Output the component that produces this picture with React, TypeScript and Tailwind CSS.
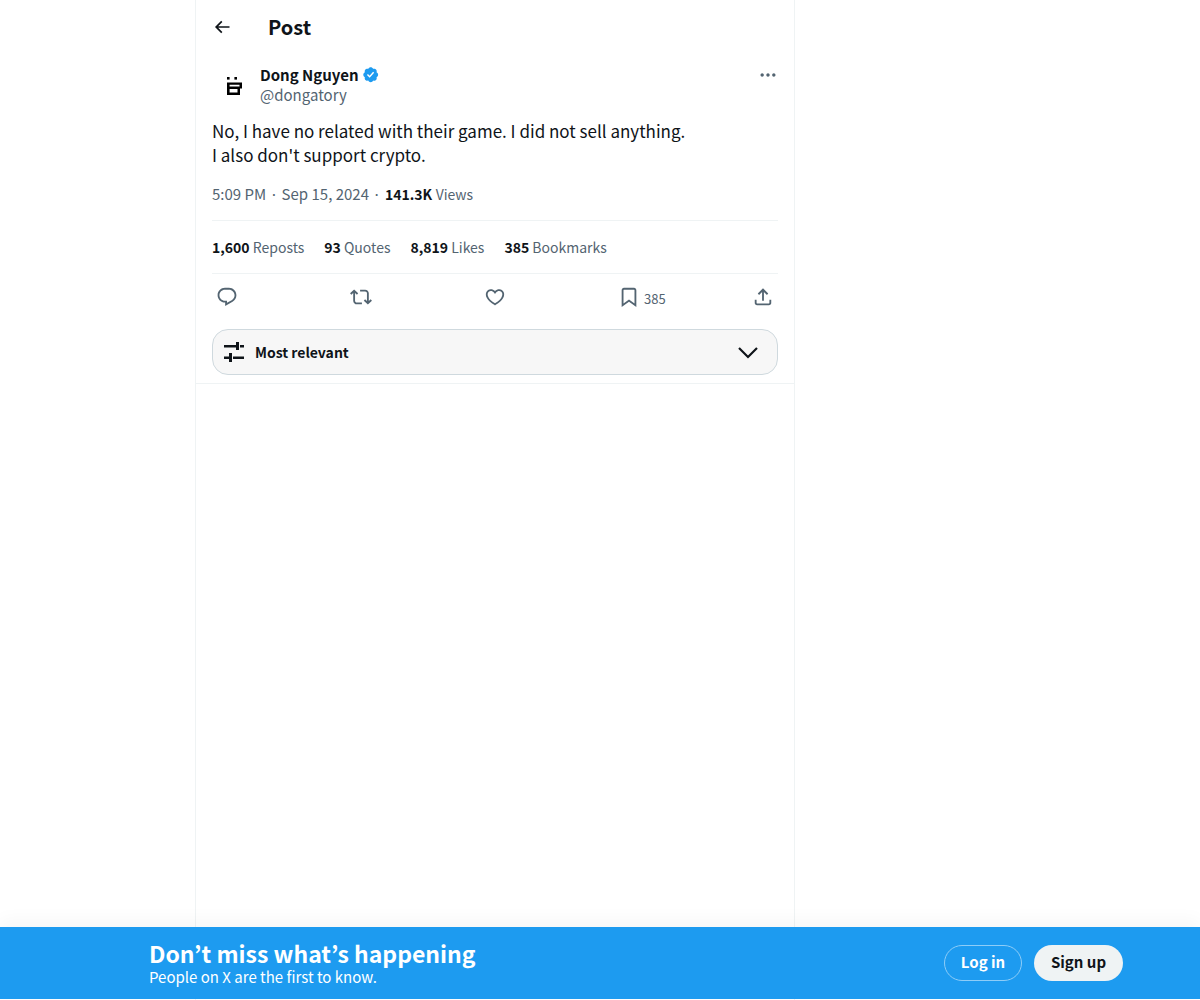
const P = ({ d, className }: { d: string; className: string }) => (
  <svg viewBox="0 0 24 24" fill="currentColor" className={className}>
    <path d={d} />
  </svg>
);

const icons = {
  back: "M7.414 13l5.043 5.04-1.414 1.42L3.586 12l7.457-7.46 1.414 1.42L7.414 11H21v2H7.414z",
  verified:
    "M20.396 11c-.018-.646-.215-1.275-.57-1.816-.354-.54-.852-.972-1.438-1.246.223-.607.27-1.264.14-1.897-.131-.634-.437-1.218-.882-1.687-.47-.445-1.053-.75-1.687-.882-.633-.13-1.29-.083-1.897.14-.273-.587-.704-1.086-1.245-1.44S11.647 1.62 11 1.604c-.646.017-1.273.213-1.813.568s-.969.854-1.24 1.44c-.608-.223-1.267-.272-1.902-.14-.635.13-1.22.436-1.69.882-.445.47-.749 1.055-.878 1.688-.13.633-.08 1.29.144 1.896-.587.274-1.087.705-1.443 1.245-.356.54-.555 1.17-.574 1.817.02.647.218 1.276.574 1.817.356.54.856.972 1.443 1.245-.224.606-.274 1.263-.144 1.896.13.634.433 1.218.877 1.688.47.443 1.054.747 1.687.878.633.132 1.29.084 1.897-.136.274.586.705 1.084 1.246 1.439.54.354 1.17.551 1.816.569.647-.016 1.276-.213 1.817-.567s.972-.854 1.245-1.44c.604.239 1.266.296 1.903.164.636-.132 1.22-.447 1.68-.907.46-.46.776-1.044.908-1.681s.075-1.299-.165-1.903c.586-.274 1.084-.705 1.439-1.246.354-.54.551-1.17.569-1.816zM9.662 14.85l-3.429-3.428 1.293-1.302 2.072 2.072 4.4-4.794 1.347 1.246z",
  dots: "M3 12c0-1.1.9-2 2-2s2 .9 2 2-.9 2-2 2-2-.9-2-2zm9 2c1.1 0 2-.9 2-2s-.9-2-2-2-2 .9-2 2 .9 2 2 2zm7 0c1.1 0 2-.9 2-2s-.9-2-2-2-2 .9-2 2 .9 2 2 2z",
  reply:
    "M1.751 10c0-4.42 3.584-8 8.005-8h4.366c4.49 0 8.129 3.64 8.129 8.13 0 2.96-1.607 5.68-4.196 7.11l-8.054 4.46v-3.69h-.067c-4.49.1-8.183-3.51-8.183-8.01zm8.005-6c-3.317 0-6.005 2.69-6.005 6 0 3.37 2.77 6.08 6.138 6.01l.351-.01h1.761v2.3l5.087-2.81c1.951-1.08 3.163-3.13 3.163-5.36 0-3.39-2.744-6.13-6.129-6.13H9.756z",
  retweet:
    "M4.5 3.88l4.432 4.14-1.364 1.46L5.5 7.55V16c0 1.1.896 2 2 2H13v2H7.5c-2.209 0-4-1.79-4-4V7.55L1.432 9.48.068 8.02 4.5 3.88zM16.5 6H11V4h5.5c2.209 0 4 1.79 4 4v8.45l2.068-1.93 1.364 1.46-4.432 4.14-4.432-4.14 1.364-1.46 2.068 1.93V8c0-1.1-.896-2-2-2z",
  like:
    "M16.697 5.5c-1.222-.06-2.679.51-3.89 2.16l-.805 1.09-.806-1.09C9.984 6.01 8.526 5.44 7.304 5.5c-1.243.07-2.349.78-2.91 1.91-.552 1.12-.633 2.78.479 4.82 1.074 1.97 3.257 4.27 7.129 6.61 3.87-2.34 6.052-4.64 7.126-6.61 1.111-2.04 1.03-3.7.477-4.82-.561-1.13-1.666-1.84-2.908-1.91zm4.187 7.69c-1.351 2.48-4.001 5.12-8.379 7.67l-.503.3-.504-.3c-4.379-2.55-7.029-5.19-8.382-7.67-1.36-2.5-1.41-4.86-.514-6.67.887-1.79 2.647-2.91 4.601-3.01 1.651-.09 3.368.56 4.798 2.01 1.429-1.45 3.146-2.1 4.796-2.01 1.954.1 3.714 1.22 4.601 3.01.896 1.81.846 4.17-.514 6.67z",
  bookmark:
    "M4 4.5C4 3.12 5.119 2 6.5 2h11C18.881 2 20 3.12 20 4.5v18.44l-8-5.71-8 5.71V4.5zM6.5 4c-.276 0-.5.22-.5.5v14.56l6-4.29 6 4.29V4.5c0-.28-.224-.5-.5-.5h-11z",
  share:
    "M12 2.59l5.7 5.7-1.41 1.42L13 6.41V16h-2V6.41l-3.3 3.3-1.41-1.42L12 2.59zM21 15l-.02 3.51c0 1.38-1.12 2.49-2.5 2.49H5.5C4.11 21 3 19.88 3 18.5V15h2v3.5c0 .28.22.5.5.5h12.98c.28 0 .5-.22.5-.5L19 15h2z",
};

const Stat = ({ n, label }: { n: string; label: string }) => (
  <span className="text-[14px] leading-5 text-[#536471]">
    <span className="font-bold text-[#0f1419]">{n}</span> {label}
  </span>
);

export default function App() {
  return (
    <div className="relative h-[1000px] overflow-hidden bg-white text-[#0f1419] font-['Noto_Sans_CJK_JP','Noto_Sans',sans-serif]">
      <main className="ml-[195px] flex h-full w-[600px] flex-col border-x border-[#eff3f4]">
        <header className="flex h-[53px] items-center pl-4">
          <P d={icons.back} className="h-5 w-5" />
          <h1 className="ml-[36px] text-[20px] font-bold leading-6">Post</h1>
        </header>

        <section className="border-b border-[#eff3f4] px-4 pb-2">
          <div className="mt-[12px] flex items-start">
            <div className="flex h-10 w-10 items-center justify-center pt-[2px]">
              <svg viewBox="0 0 16 18" className="ml-[6px] h-[18px] w-4" fill="#000">
                <rect x="0" y="0" width="2.6" height="2.6" />
                <rect x="7.4" y="0" width="2.6" height="2.6" />
                <path
                  fillRule="evenodd"
                  d="M0 5.5h15v6h-2v6.5H0V5.5zM2.6 7.8v1.7h9.9V7.8H2.6zm0 4.2v3.5h7.9V12H2.6z"
                />
              </svg>
            </div>
            <div className="ml-2 flex-1">
              <div className="flex items-center text-[15px] font-bold leading-5">
                Dong Nguyen
                <P d={icons.verified} className="ml-[3px] h-[19px] w-[19px] text-[#1d9bf0]" />
              </div>
              <div className="text-[15px] leading-5 text-[#536471]">@dongatory</div>
            </div>
            <P d={icons.dots} className="h-5 w-5 text-[#536471]" />
          </div>

          <p className="mt-[14px] text-[17px] leading-6">
            No, I have no related with their game. I did not sell anything.
            <br />
            I also don't support crypto.
          </p>

          <div className="mt-[17px] flex h-5 items-center text-[15px] leading-5 text-[#536471]">
            <span>5:09 PM</span>
            <span className="mx-[3.5px]">·</span>
            <span>Sep 15, 2024</span>
            <span className="ml-[3.5px] mr-[4px]">·</span>
            <span className="text-[14px] font-bold text-[#0f1419]">141.3K</span>
            <span className="ml-[3.5px] text-[14px]">Views</span>
          </div>

          <div className="mt-[16px] flex h-[54px] items-center gap-5 border-y border-[#eff3f4]">
            <Stat n="1,600" label="Reposts" />
            <Stat n="93" label="Quotes" />
            <Stat n="8,819" label="Likes" />
            <Stat n="385" label="Bookmarks" />
          </div>

          <div className="grid h-[48px] grid-cols-[repeat(5,134px)] items-center pb-[2px] pl-[4px] text-[#536471]">
            <P d={icons.reply} className="h-[22px] w-[22px]" />
            <P d={icons.retweet} className="h-[22px] w-[22px]" />
            <P d={icons.like} className="h-[22px] w-[22px]" />
            <div className="flex items-center gap-[4px]">
              <P d={icons.bookmark} className="h-[22px] w-[22px]" />
              <span className="mt-[4px] text-[13px] leading-4">385</span>
            </div>
            <P d={icons.share} className="h-[22px] w-[22px]" />
          </div>

          <div className="mt-[7px] flex h-[46px] w-[566px] items-center rounded-2xl border border-[#cfd9de] bg-[#f7f7f7] pl-[10px] pr-[19px]">
            <svg viewBox="0 0 22 22" className="h-[22px] w-[22px]" fill="#0f1419">
              <rect x="1" y="4" width="13" height="2.5" />
              <rect x="13" y="1" width="3" height="8" />
              <rect x="17" y="4" width="4" height="2.5" />
              <rect x="1" y="15.5" width="5" height="2.5" />
              <rect x="6" y="12" width="3" height="9" />
              <rect x="10" y="15.5" width="11" height="2.5" />
            </svg>
            <span className="ml-[10px] flex-1 text-[14px] font-bold leading-5">Most relevant</span>
            <svg viewBox="0 0 20 14" className="h-[14px] w-5" fill="none" stroke="#0f1419" strokeWidth="2.2">
              <path d="M1 3l9 9 9-9" />
            </svg>
          </div>
        </section>
      </main>

      <div className="absolute inset-x-0 bottom-[1px] h-[72px] bg-[#1d9bf0] shadow-[0_-8px_16px_rgba(0,0,0,0.03)]">
        <div className="flex h-full items-center pl-[149px] pr-[77px]">
          <div className="flex-1 text-white">
            <div className="-mt-[1px] text-[23px] font-bold leading-7">Don’t miss what’s happening</div>
            <div className="text-[15px] leading-[19px]">People on X are the first to know.</div>
          </div>
          <div className="flex items-center gap-3">
            <div className="flex h-9 w-[78px] items-center justify-center rounded-full border border-[#8ecdf8] pb-[1px] text-[15px] font-bold text-white">
              Log in
            </div>
            <div className="flex h-9 w-[89px] items-center justify-center rounded-full bg-[#eff3f4] pb-[1px] text-[15px] font-bold text-[#0f1419]">
              Sign up
            </div>
          </div>
        </div>
      </div>
    </div>
  );
}
